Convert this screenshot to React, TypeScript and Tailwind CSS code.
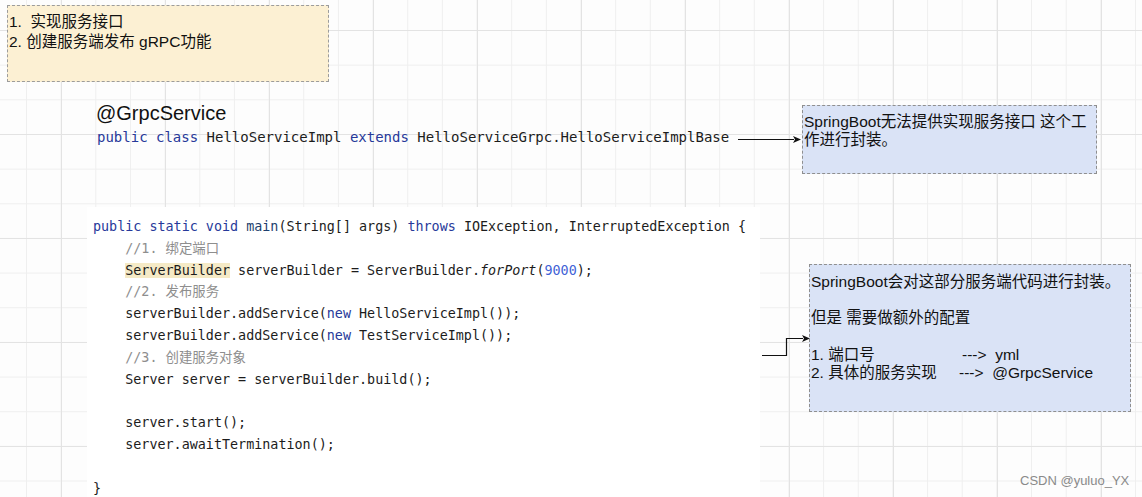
import React from 'react';

type Tok = { t: string; c?: string };

const KW = 'text-[#27399a]';
const CM = 'text-[#8e8e8e]';
const HL = 'bg-[#f5eac6]';

const codeLines: Tok[][] = [
  [{ t: 'public static void ', c: KW }, { t: 'main', c: 'text-[#1d3f6e]' }, { t: '(String[] args) ' }, { t: 'throws ', c: KW }, { t: 'IOException, InterruptedException {' }],
  [{ t: '    ' }, { t: '//1. 绑定端口', c: CM }],
  [{ t: '    ' }, { t: 'ServerBuilder', c: HL }, { t: ' serverBuilder = ServerBuilder.' }, { t: 'forPort', c: 'italic' }, { t: '(' }, { t: '9000', c: 'text-[#3f62d6]' }, { t: ');' }],
  [{ t: '    ' }, { t: '//2. 发布服务', c: CM }],
  [{ t: '    serverBuilder.addService(' }, { t: 'new', c: KW }, { t: ' HelloServiceImpl());' }],
  [{ t: '    serverBuilder.addService(' }, { t: 'new', c: KW }, { t: ' TestServiceImpl());' }],
  [{ t: '    ' }, { t: '//3. 创建服务对象', c: CM }],
  [{ t: '    Server server = serverBuilder.build();' }],
  [{ t: ' ' }],
  [{ t: '    server.start();' }],
  [{ t: '    server.awaitTermination();' }],
  [{ t: ' ' }],
  [{ t: '}' }],
];

const sans = "font-['Liberation_Sans','Noto_Sans_CJK_SC',sans-serif]";
const mono = "font-['DejaVu_Sans_Mono','Noto_Sans_CJK_SC',monospace]";

function Arrows() {
  return (
    <svg className="absolute left-0 top-0" width="1142" height="497" viewBox="0 0 1142 497">
      <line x1="738" y1="139.5" x2="794" y2="139.5" stroke="#111" strokeWidth="1.2" />
      <polygon points="801,139.5 793,136 795,139.5 793,143" fill="#111" />
      <polyline points="762,355.5 786.5,355.5 786.5,338.5 803,338.5" fill="none" stroke="#111" strokeWidth="1.2" />
      <polygon points="810,338.5 802,335 804,338.5 802,342" fill="#111" />
    </svg>
  );
}

export default function App() {
  return (
    <div className={`relative w-[1142px] h-[497px] overflow-hidden bg-[#fdfdfd] ${sans} text-[#111]`}>
      {/* canvas grid */}
      <div className="absolute inset-0 bg-[linear-gradient(to_right,#e3e3e3_1px,transparent_1px),linear-gradient(to_bottom,#e3e3e3_1px,transparent_1px),linear-gradient(to_right,#efefef_1px,transparent_1px),linear-gradient(to_bottom,#efefef_1px,transparent_1px)] [background-size:104px_104px,104px_104px,34.667px_34.667px,34.667px_34.667px] [background-position:61px_30px,61px_30px,26px_30px,26px_30px]" />

      {/* yellow note */}
      <div className="absolute left-[7px] top-[5px] w-[322px] h-[77px] bg-[#fcf0d3] border border-dashed border-[#9c9c9c] pl-[1px] pt-[6px] text-[15.5px] leading-[19.5px] whitespace-pre">
        <div>1.  实现服务接口</div>
        <div>2. 创建服务端发布 gRPC功能</div>
      </div>

      {/* annotation + class line */}
      <div className="absolute left-[96px] top-[101px] flex flex-col">
        <div className="text-[20px] leading-[24px]">@GrpcService</div>
        <div className={`pl-[1px] pt-[2px] ${mono} text-[14px] leading-[20px] whitespace-pre text-[#1c1c1c]`}>
          <span className={KW}>public class</span> HelloServiceImpl <span className={KW}>extends</span> HelloServiceGrpc.HelloServiceImplBase
        </div>
      </div>

      {/* blue note 1 */}
      <div className="absolute left-[802px] top-[105px] w-[295px] h-[69px] bg-[#dae3f6] border border-dashed border-[#8f8f8f] pl-[1px] pr-[8px] pt-[7px] text-[15.5px] leading-[17.5px]">
        SpringBoot无法提供实现服务接口 这个工作进行封装。
      </div>

      {/* code panel */}
      <div className={`absolute left-[87px] top-[207px] w-[673px] h-[290px] bg-white pl-[6px] pt-[9px] ${mono} text-[13.4px] leading-[21.8px] text-[#1c1c1c]`}>
        {codeLines.map((line, i) => (
          <div key={i} className="whitespace-pre">
            {line.map((tok, j) => (
              <span key={j} className={tok.c}>{tok.t}</span>
            ))}
          </div>
        ))}
      </div>

      {/* blue note 2 */}
      <div className="absolute left-[809px] top-[264px] w-[322px] h-[148px] bg-[#dae3f6] border border-dashed border-[#8f8f8f] pl-[1px] pt-[8px] text-[15.5px] leading-[18.2px] whitespace-pre">
        <div>SpringBoot会对这部分服务端代码进行封装。</div>
        <div> </div>
        <div>但是 需要做额外的配置</div>
        <div> </div>
        <div className="flex">
          <span className="w-[151px]">1. 端口号</span>
          <span>{'--->  yml'}</span>
        </div>
        <div className="flex">
          <span className="w-[148px]">2. 具体的服务实现</span>
          <span>{'--->  @GrpcService'}</span>
        </div>
      </div>

      <Arrows />

      <div className="absolute left-[1020px] top-[472px] text-[13px] leading-[18px] text-[#8a8a8a]">CSDN @yuluo_YX</div>
    </div>
  );
}
